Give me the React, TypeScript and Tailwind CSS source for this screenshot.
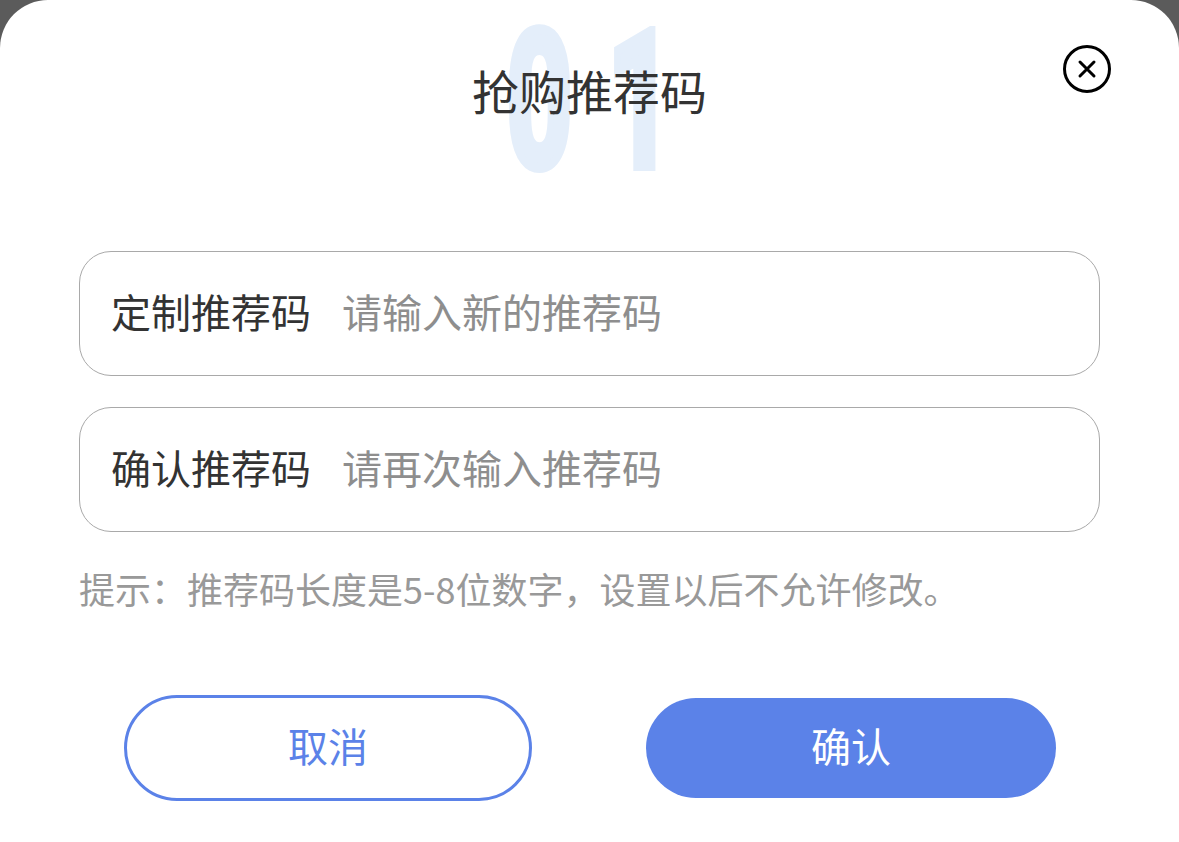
import React from "react";

const cjk = { fontFamily: '"Noto Sans CJK SC", "Noto Sans", sans-serif' };

function Field({ label, placeholder }: { label: string; placeholder: string }) {
  return (
    <div className="flex h-[125px] items-center rounded-[32px] border border-[#a9a9a9] pb-[6px] pl-[31px] pr-[31px]">
      <span className="shrink-0 text-[40px] leading-[40px] text-[#333333]">{label}</span>
      <input
        className="ml-[31px] min-w-0 flex-1 bg-transparent text-[40px] leading-[40px] text-[#333333] outline-none placeholder:text-[#8e8e8e]"
        placeholder={placeholder}
        style={cjk}
      />
    </div>
  );
}

export default function App() {
  return (
    <div className="min-h-[842px] bg-[#5b5b5b]" style={cjk}>
      <div className="h-[842px] rounded-t-[48px] bg-white">
        <div className="relative flex justify-center pt-[66px]">
          <div
            className="pointer-events-none absolute left-1/2 top-[6px] flex -translate-x-1/2 select-none text-[190px] font-bold leading-[190px] text-[#e4eefa] [-webkit-text-stroke:10px_#e4eefa]"
            style={{ fontFamily: 'Roboto, "Liberation Sans", sans-serif' }}
          >
            <span className="inline-block scale-x-[0.6]">0</span>
            <span className="-ml-[8px] inline-block scale-x-[0.6]">1</span>
          </div>
          <h1 className="relative text-[47px] font-normal leading-[47px] text-[#333333]">抢购推荐码</h1>
          <button className="absolute right-[68px] top-[45px] flex h-[48px] w-[48px] items-center justify-center rounded-full border-[3px] border-black">
            <svg width="20" height="20" viewBox="0 0 20 20" fill="none" stroke="black" strokeWidth="3" strokeLinecap="round">
              <path d="M3 3L17 17M17 3L3 17" />
            </svg>
          </button>
        </div>

        <div className="mt-[138px] flex flex-col gap-[31px] px-[79px]">
          <Field label="定制推荐码" placeholder="请输入新的推荐码" />
          <Field label="确认推荐码" placeholder="请再次输入推荐码" />
        </div>

        <p className="mt-[38px] px-[79px] text-[36px] leading-[36px] text-[#999999]">
          提示：推荐码长度是5-8位数字，设置以后不允许修改。
        </p>

        <div className="mt-[89px] flex items-center justify-between pl-[124px] pr-[123px]">
          <button className="flex h-[106px] w-[408px] items-center justify-center rounded-full border-[3px] border-[#5b82e8] pb-[6px] text-[40px] text-[#5b82e8]">
            取消
          </button>
          <button className="flex h-[100px] w-[410px] items-center justify-center rounded-full bg-[#5b82e8] pb-[6px] text-[40px] text-white">
            确认
          </button>
        </div>
      </div>
    </div>
  );
}
